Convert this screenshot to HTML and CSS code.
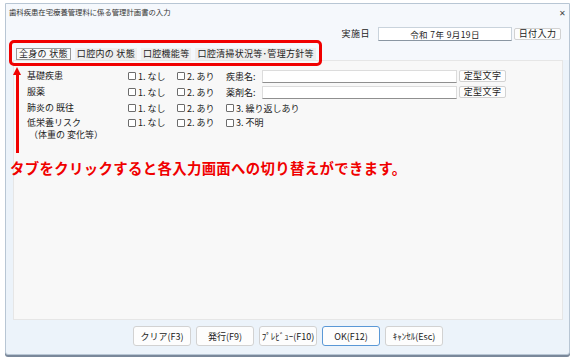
FILE: index.html
```html
<!DOCTYPE html>
<html lang="ja">
<head>
    <meta charset="UTF-8">
    <meta name="viewport" content="width=device-width, initial-scale=1.0">
    <title>歯科疾患在宅療養管理料に係る管理計画書の入力</title>
    <link rel="stylesheet" href="styles.css">
</head>
<body>
    <div class="window">
        <div class="titlebar">
            <span class="title">歯科疾患在宅療養管理料に係る管理計画書の入力</span>
            <span class="close">✕</span>
        </div>

        <div class="header">
            <span class="date-label">実施日</span>
            <div class="date-box">令和 7年 9月19日</div>
            <button class="btn small">日付入力</button>
        </div>

        <div class="tabs">
            <span class="tab active">全身の 状態</span>
            <span class="tab">口腔内の 状態</span>
            <span class="tab">口腔機能等</span>
            <span class="tab">口腔清掃状況等･管理方針等</span>
        </div>

        <div class="panel">
            <div class="row">
                <span class="label">基礎疾患</span>
                <label class="check"><i></i>1. なし</label>
                <label class="check"><i></i>2. あり</label>
                <span class="field-label">疾患名:</span>
                <input class="field" type="text">
                <button class="btn small">定型文字</button>
            </div>
            <div class="row">
                <span class="label">服薬</span>
                <label class="check"><i></i>1. なし</label>
                <label class="check"><i></i>2. あり</label>
                <span class="field-label">薬剤名:</span>
                <input class="field" type="text">
                <button class="btn small">定型文字</button>
            </div>
            <div class="row">
                <span class="label">肺炎の 既往</span>
                <label class="check"><i></i>1. なし</label>
                <label class="check"><i></i>2. あり</label>
                <label class="check wide"><i></i>3. 繰り返しあり</label>
            </div>
            <div class="row tall">
                <span class="label">低栄養リスク<br>&nbsp;（体重の 変化等）</span>
                <label class="check"><i></i>1. なし</label>
                <label class="check"><i></i>2. あり</label>
                <label class="check wide"><i></i>3. 不明</label>
            </div>
        </div>

        <div class="footer">
            <button class="btn">クリア(F3)</button>
            <button class="btn">発行(F9)</button>
            <button class="btn">ﾌﾟﾚﾋﾞｭｰ(F10)</button>
            <button class="btn default">OK(F12)</button>
            <button class="btn">ｷｬﾝｾﾙ(Esc)</button>
        </div>
    </div>

    <!-- annotation overlay -->
    <div class="mark-box"></div>
    <div class="mark-arrow"></div>
    <p class="mark-text">タブをクリックすると各入力画面への切り替えができます。</p>
</body>
</html>
```

FILE: styles.css
```css
* {
    margin: 0;
    padding: 0;
    box-sizing: border-box;
}

body {
    font-family: "Noto Sans CJK JP", "Noto Sans", sans-serif;
    font-size: 9px;
    color: #222;
    background: #ffffff;
    width: 575px;
    height: 359px;
    position: relative;
    overflow: hidden;
}

.window {
    margin: 3px 0 0 5px;
    width: 565px;
    height: 352px;
    background: #ecf3fa;
    border: 1px solid #b8c6d4;
    border-radius: 0 0 3px 3px;
    display: flex;
    flex-direction: column;
    box-shadow: 0 2px 0 #7a889a;
}

.titlebar {
    height: 15px;
    display: flex;
    align-items: center;
    justify-content: space-between;
    padding: 0 3px 0 3px;
    background: #f5f8fc;
}

.title {
    font-size: 7.4px;
    color: #333;
    letter-spacing: -0.05px;
}

.close {
    font-size: 8px;
    color: #444;
    margin-top: 2px;
}

.header {
    height: 29px;
    display: flex;
    align-items: center;
    justify-content: flex-end;
    padding: 0 8px 0 0;
    gap: 2px;
    background: #f5f8fc;
}

.date-label {
    margin-right: 6px;
    font-size: 9px;
    letter-spacing: 0.5px;
}

.date-box {
    width: 134px;
    height: 14px;
    background: #fff;
    border: 1px solid #c9d3dc;
    border-bottom-color: #8a96a2;
    text-align: center;
    line-height: 12px;
    font-size: 8.5px;
    letter-spacing: 0.4px;
}

.btn {
    font-family: inherit;
    font-size: 9px;
    color: #222;
    background: #fdfdfd;
    border: 1px solid #d2d2d2;
    border-radius: 3px;
    width: 58px;
    height: 20px;
}

.btn.small {
    width: 47px;
    height: 12px;
    line-height: 10px;
    border-radius: 2px;
    letter-spacing: 0.4px;
}

.btn.default {
    border-color: #5a98d6;
}

.tabs {
    height: 12px;
    display: flex;
    align-items: flex-end;
    gap: 4px;
    padding-left: 10px;
    background: #f5f8fc;
}

.tab {
    height: 12px;
    line-height: 11px;
    padding: 0 2px;
    background: #eeeeee;
    white-space: nowrap;
    letter-spacing: 0.3px;
}

.tab.active {
    background: #fafafa;
    border: 1px solid #9a9a9a;
    line-height: 10px;
    padding: 0 2px;
}

.panel {
    height: 260px;
    margin: 0 6px 0 7px;
    background: #f8f8f8;
    border: 1px solid #e6e6e6;
    padding: 7px 0 0 13px;
}

.row {
    display: flex;
    align-items: center;
    height: 16px;
}

.row.tall {
    align-items: flex-start;
    padding-top: 1px;
    height: 28px;
}

.row.tall .check {
    line-height: 12px;
}

.label {
    width: 101px;
    line-height: 12px;
    white-space: nowrap;
}

.check {
    width: 49px;
    display: flex;
    align-items: center;
    white-space: nowrap;
}

.check.wide {
    width: auto;
}

.check i {
    width: 8px;
    height: 8px;
    border: 1px solid #6c6c6c;
    border-radius: 1px;
    background: #fff;
    margin-right: 2px;
}

.field-label {
    width: 36px;
    white-space: nowrap;
}

.field {
    width: 195px;
    height: 13px;
    background: #fff;
    border: 1px solid #dcdcdc;
    border-bottom-color: #8f8f8f;
    margin-right: 2px;
    outline: none;
}

.footer {
    flex: 1;
    display: flex;
    justify-content: center;
    gap: 5px;
    padding-top: 6px;
    padding-left: 1px;
}

.mark-box {
    position: absolute;
    left: 9px;
    top: 40px;
    width: 313px;
    height: 26px;
    border: 3px solid #f00000;
    border-radius: 5px;
}

.mark-arrow {
    position: absolute;
    left: 16px;
    top: 74px;
    width: 2.5px;
    height: 79px;
    background: #f00000;
}

.mark-arrow::before {
    content: "";
    position: absolute;
    left: -3px;
    top: -7px;
    border-left: 4px solid transparent;
    border-right: 4px solid transparent;
    border-bottom: 8px solid #f00000;
    margin-left: -0.5px;
}

.mark-text {
    position: absolute;
    left: 10px;
    top: 159px;
    font-size: 14.4px;
    font-weight: 700;
    color: #f00000;
    line-height: 18px;
    white-space: nowrap;
    letter-spacing: 0.35px;
}
```
